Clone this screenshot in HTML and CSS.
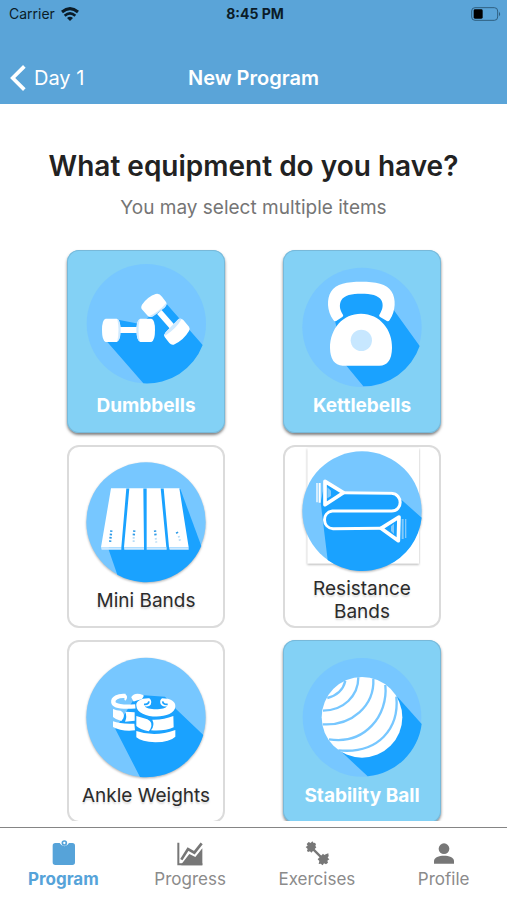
FILE: index.html
```html
<!DOCTYPE html>
<html lang="en">
<head>
<meta charset="utf-8">
<meta name="viewport" content="width=device-width, initial-scale=1">
<title>New Program</title>
<link rel="stylesheet" href="styles.css">
</head>
<body>
<header class="header">
  <div class="status">
    <span class="carrier">Carrier
      <svg class="wifi" viewBox="0 0 54 42" aria-hidden="true">
        <path d="M3 15Q27-5 51 15" fill="none" stroke="currentColor" stroke-width="9"/>
        <path d="M11 26Q27 12 43 26" fill="none" stroke="currentColor" stroke-width="8"/>
        <path d="M18 33Q27 25 36 33L27 42Z" fill="currentColor"/>
      </svg>
    </span>
    <time class="clock">8:45 PM</time>
    <svg class="battery" viewBox="0 0 90 42" aria-hidden="true">
      <rect x="2" y="2" width="78" height="38" rx="10" fill="none" stroke="#2f5f80" stroke-width="3"/>
      <rect x="8" y="7" width="27" height="28" rx="4" fill="#000"/>
      <path d="M84 14q7 7 0 14z" fill="#2f5f80"/>
    </svg>
  </div>
  <nav class="navbar">
    <a class="back" href="#">
      <svg class="chevron" viewBox="0 0 48 78" aria-hidden="true"><path d="M43 4L8 39L43 74" fill="none" stroke="currentColor" stroke-width="11"/></svg>
      Day 1
    </a>
    <h1 class="title">New Program</h1>
  </nav>
</header>

<main class="content">
  <h2 class="question">What equipment do you have?</h2>
  <p class="hint">You may select multiple items</p>
  <div class="grid">
    <button class="card selected" type="button" aria-pressed="true">
      <svg class="art" viewBox="21 28 474 432" aria-hidden="true">
        <circle cx="259" cy="249" r="179" fill="#77c7ff"/>
        <path d="M140 302L178 238L240 250L318 188L428 313A179 179 0 0 1 250 428Z" fill="#1aa2ff"/>
        <path d="M175 268H240" stroke="#fff" stroke-width="18"/>
        <path d="M137 234H170Q181 237 181 268Q181 300 170 304H137Q126 300 126 268Q126 237 137 234Z" fill="#fff"/>
        <path d="M241 234H274Q285 237 285 268Q285 300 274 304H241Q230 300 230 268Q230 237 241 234Z" fill="#fff"/>
        <path d="M172 236Q182 239 182 268Q182 299 172 302Q179 268 172 236M239 236Q229 240 229 268Q229 298 239 302Q232 268 239 236" fill="#cfeaff"/>
        <path d="M298 214L338 260" stroke="#fff" stroke-width="18"/>
        <path d="M287 160Q298 157 306 168L318 184Q323 192 315 199L278 227Q270 232 263 225L247 207Q241 201 246 192Q264 167 287 160Z" fill="#fff"/>
        <path d="M356 235Q363 232 370 238L387 258Q391 264 387 271Q370 300 341 312Q334 314 328 307L314 289Q310 282 317 275Z" fill="#fff"/>
        <path d="M318 188Q321 195 314 201L280 227Q273 231 267 227Q298 213 318 188M356 234Q361 232 365 235Q347 266 315 285Q312 281 317 275Z" fill="#cfeaff"/>
      </svg>
      <span class="label">Dumbbells</span>
    </button>

    <button class="card selected" type="button" aria-pressed="true">
      <svg class="art" viewBox="24 30 474 432" aria-hidden="true">
        <circle cx="261" cy="262" r="179" fill="#77c7ff"/>
        <path d="M180 243L200 150H320L359 214L434 318A179 179 0 0 1 265 439L213 376Z" fill="#1aa2ff"/>
        <path d="M175 240C155 212 155 175 168 155C182 130 217 125 259 125S336 130 350 155C363 175 363 212 344 240Q340 247 332 241L314 230Q310 226 315 221C323 209 326 193 319 181C311 165 287 161 259 161S207 165 199 181C192 193 194 209 202 221Q207 226 203 230L187 241Q180 247 175 240Z" fill="#fff"/>
        <path d="M258 221C315 221 353 270 351 324Q350 377 313 377H203Q166 375 165 324C165 265 204 221 258 221Z" fill="#fff"/>
        <circle cx="259" cy="301" r="32" fill="#c7e7ff"/>
      </svg>
      <span class="label">Kettlebells</span>
    </button>

    <button class="card" type="button" aria-pressed="false">
      <svg class="art raised" viewBox="21 18 474 432" aria-hidden="true">
        <circle cx="258" cy="249" r="179" fill="#77c7ff"/>
        <path d="M146 332L155 150H361L424 321A179 179 0 0 1 172 407Z" fill="#1aa2ff"/>
        <path d="M153 148H199L184 325H123ZM208 148H250L252 325H192ZM260 148H302L319 325H260ZM311 148H358L386 325H327Z" fill="#fff"/>
        <path d="M123 325H184V332H125ZM192 325H252V332H193ZM260 325H320V332H260ZM327 325H386V332H329Z" fill="#cfeaff"/>
        <path d="M154 274L150 311M223 274L221 291M285 274L287 293M350 279L354 286" stroke="#2e9be8" stroke-width="7" stroke-dasharray="5 5"/>
        <path d="M221 294V311M287 297L289 311M356 291L361 310" stroke="#b6dcf7" stroke-width="6" stroke-dasharray="5 5"/>
      </svg>
      <span class="label">Mini Bands</span>
    </button>

    <button class="card" type="button" aria-pressed="false">
      <svg class="art short raised" viewBox="24 18 474 396" aria-hidden="true">
        <rect x="97" y="27" width="335" height="347" fill="#fff"/>
        <circle cx="261" cy="216" r="179" fill="#77c7ff"/>
        <path d="M137 190L150 128L205 158H352L440 236A179 179 0 0 1 158 363Z" fill="#1aa2ff"/>
        <g fill="none" stroke="#fff" stroke-width="9" stroke-linejoin="round">
          <path d="M203 161L350 163C384 166 384 215 350 216L172 216C139 221 142 267 174 269L318 268"/>
          <path d="M150 127L205 161L150 197Z" stroke-width="11"/>
          <path d="M372 234L318 268L370 305Z" stroke-width="11"/>
        </g>
        <path d="M124 132H128V190H124ZM131 132H137V191H131Z" fill="#fff"/>
        <path d="M157 145L168 155V171L157 178ZM357 254V285L348 276V262ZM380 240H386V300H380ZM390 240H394V297H390Z" fill="#81c9fb"/>
      </svg>
      <span class="label">Resistance Bands</span>
    </button>

    <button class="card" type="button" aria-pressed="false">
      <svg class="art raised" viewBox="21 18 474 432" aria-hidden="true">
        <circle cx="258" cy="250" r="179" fill="#77c7ff"/>
        <path d="M166 285L230 182L315 188L348 225L430 303A179 179 0 0 1 240 429Z" fill="#1aa2ff"/>
        <path d="M196 186C174 184 158 193 160 205C162 216 190 220 226 217" fill="none" stroke="#fff" stroke-width="13"/>
        <path d="M194 183Q201 187 196 196M222 199L217 190Q226 177 248 186L244 193Q232 196 222 199" fill="#fff" stroke="#fff" stroke-width="6" stroke-linecap="round" stroke-linejoin="round"/>
        <path d="M159 225Q170 230 182 230Q196 239 190 253L184 261Q167 257 159 249ZM196 233L224 235V260L195 263Q202 249 196 233ZM159 262Q182 271 223 269L225 289Q184 293 159 279Z" fill="#fff"/>
        <path d="M229 215C227 202 243 192 268 193Q277 200 272 212Q268 219 255 217C258 229 318 229 320 217Q304 219 301 208Q299 198 306 193C332 193 347 203 346 217C345 259 230 257 229 215Z" fill="#fff"/>
        <path d="M252 211Q265 213 267 202M308 202Q309 212 323 211" fill="none" stroke="#1aa2ff" stroke-width="5"/>
        <path d="M229 246Q248 252 262 256Q281 264 271 286L266 292Q239 286 229 276ZM277 257Q311 258 340 246L341 280Q314 292 273 289Q285 274 277 257Z" fill="#fff"/>
        <path d="M229 291Q285 311 346 288V308Q330 324 286 325Q244 323 229 310Z" fill="#fff"/>
      </svg>
      <span class="label">Ankle Weights</span>
    </button>

    <button class="card selected" type="button" aria-pressed="true">
      <svg class="art" viewBox="24 18 474 432" aria-hidden="true">
        <circle cx="261" cy="250" r="178" fill="#77c7ff"/>
        <path d="M201 355L367 188L440 270A180 180 0 0 1 278 427Z" fill="#1aa2ff"/>
        <circle cx="261" cy="250" r="121" fill="#fff"/>
        <path d="M211 141Q201 181 157 192M250 130C250 186 205 230 144 230M295 134C299 216 230 276 143 271M331 153C340 244 270 333 162 316M364 188C373 282 312 361 190 349" fill="none" stroke="#77c7ff" stroke-width="7"/>
      </svg>
      <span class="label">Stability Ball</span>
    </button>
  </div>
</main>

<nav class="tabs" aria-label="Main">
  <a class="tab active" href="#" aria-current="page">
    <svg class="tab-icon" viewBox="0 0 78 78" aria-hidden="true"><path d="M13 9H29Q35 19 43 19T57 9H67Q75 9 75 17V67Q75 75 67 75H16Q8 75 8 67V17Q8 9 16 9Z" fill="currentColor"/><circle cx="43" cy="9" r="6" fill="none" stroke="currentColor" stroke-width="5"/></svg>
    Program
  </a>
  <a class="tab" href="#">
    <svg class="tab-icon" viewBox="0 0 78 78" aria-hidden="true"><path d="M4 8V73H76" fill="none" stroke="currentColor" stroke-width="6"/><path d="M13 59L33 27L52 38L74 10" fill="none" stroke="currentColor" stroke-width="8"/><path d="M13 73L37 42L55 51L76 25V76H13Z" fill="currentColor"/></svg>
    Progress
  </a>
  <a class="tab" href="#">
    <svg class="tab-icon" viewBox="0 0 78 78" aria-hidden="true"><path d="M22 22L58 58" stroke="currentColor" stroke-width="7"/><path d="M5 21L11 17L8 12L14 6L20 9L25 4L29 9L32 8L36 12L34 18L37 22L22 38L18 34L12 36L9 32L11 27ZM41 58L57 41L61 45L65 43L73 40L74 48L71 53L76 58L70 62L72 68L66 73L60 70L56 76L50 71L44 72L46 63Z" fill="currentColor"/></svg>
    Exercises
  </a>
  <a class="tab" href="#">
    <svg class="tab-icon" viewBox="0 0 78 78" aria-hidden="true"><circle cx="39" cy="26" r="16" fill="currentColor"/><path d="M9 71V63C9 42 69 42 69 63V71Z" fill="currentColor"/></svg>
    Profile
  </a>
</nav>
</body>
</html>
```
FILE: styles.css
```css
* { box-sizing: border-box; }

body {
  margin: 0;
  height: 100vh;
  display: flex;
  flex-direction: column;
  background: #fff;
  color: #222;
  font-family: Inter, "Liberation Sans", sans-serif;
}

a { color: inherit; text-decoration: none; }

.header {
  flex: none;
  background: #5aa4d8;
}

.status {
  display: grid;
  grid-template-columns: 1fr auto 1fr;
  align-items: center;
  height: 27px;
  padding: 0 6px 0 9px;
  color: #0b1c28;
  font-size: 14px;
}
.carrier { display: flex; align-items: center; gap: 6px; }
.wifi { width: 18px; height: 14px; }
.clock { font-weight: 700; }
.battery { width: 30px; height: 14px; justify-self: end; }

.navbar {
  display: grid;
  grid-template-columns: 1fr auto 1fr;
  align-items: center;
  height: 77px;
  padding: 24px 10px 0;
  color: #fff;
}
.back { display: flex; align-items: center; gap: 8px; font-size: 20px; }
.chevron { width: 16px; height: 26px; }
.title { margin: 0; font-size: 20px; font-weight: 600; }

.content {
  flex: 1;
  min-height: 0;
  margin-bottom: 6px;
  overflow: hidden;
  text-align: center;
}
.question {
  margin: 44px 0 0;
  font-size: 28px;
  line-height: 36px;
  font-weight: 600;
}
.hint {
  margin: 12px 0 0;
  color: #757575;
  font-size: 19px;
  line-height: 24px;
}

.grid {
  display: grid;
  grid-template-columns: 1fr 1fr;
  gap: 12px 58px;
  padding: 0 66px 16px 67px;
  margin-top: 30px;
}
.card {
  display: flex;
  flex-direction: column;
  align-items: center;
  min-height: 183px;
  padding: 0;
  border: 0;
  border-radius: 12px;
  background: #fff;
  box-shadow: inset 0 0 0 2px #dbdbdb;
  color: #2b2b2b;
  font: 400 19px/23px Inter, "Liberation Sans", sans-serif;
  cursor: pointer;
}
.card.selected {
  background: #83d1f5;
  box-shadow: inset 0 0 0 1px #78b9d9, 0 2px 3px rgba(0, 0, 0, .5);
  color: #fff;
  font-weight: 700;
}
.art { flex: none; width: 100%; height: 144px; }
.art.short { height: 132px; }
.raised { filter: drop-shadow(0 1px 1px rgba(0, 0, 0, .3)); }
.label { max-width: 140px; }
.card:not(.selected) .label { text-shadow: 0 2px 2px rgba(0, 0, 0, .15); }

.tabs {
  flex: none;
  display: grid;
  grid-template-columns: repeat(4, 1fr);
  height: 73px;
  border-top: 1px solid #858585;
}
.tab {
  display: flex;
  flex-direction: column;
  align-items: center;
  padding-top: 12px;
  color: #8b8b8b;
  font-size: 17px;
  line-height: 26px;
}
.tab-icon { width: 26px; height: 26px; color: #777; }
.tab.active { color: #56a3d9; font-weight: 700; }
.active .tab-icon { color: inherit; }
```
